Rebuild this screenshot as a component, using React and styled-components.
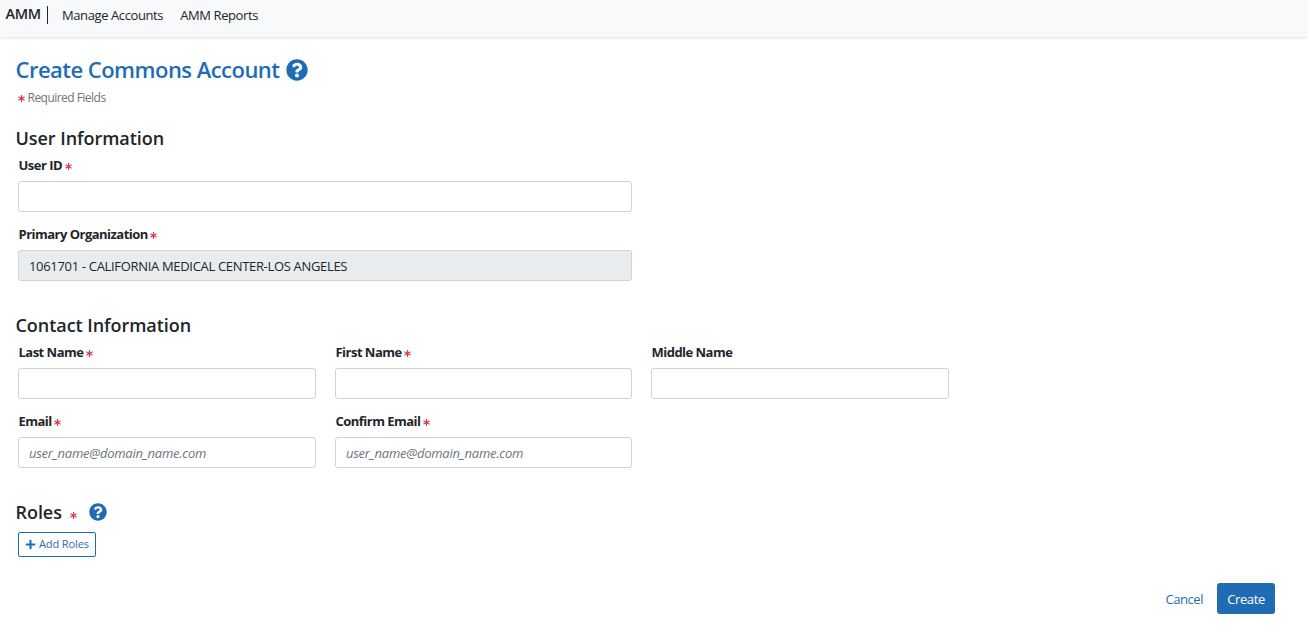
import React from "react";
import styled, { createGlobalStyle } from "styled-components";
import { FaQuestionCircle, FaPlus, FaAsterisk } from "react-icons/fa";

const Global = createGlobalStyle`
  * { box-sizing: border-box; }
  body {
    margin: 0;
    background: #fff;
    color: #212529;
    font: 13px/20px "Segoe UI", "Open Sans", "Noto Sans", sans-serif;
  }
`;

const Nav = styled.nav`
  display: flex;
  align-items: flex-start;
  height: 37px;
  padding: 5px;
  background: #f8f9fa;
  box-shadow: 0 1px 3px rgba(0, 0, 0, 0.13);
`;
const Brand = styled.a`
  width: 43px;
  height: 18px;
  margin-top: 1px;
  padding-left: 0.5px;
  border-right: 1px solid #212529;
  font-size: 14.5px;
  line-height: 16px;
  font-weight: 600;
  letter-spacing: -0.3px;
`;
const NavLink = styled.a`
  margin-left: ${(p) => p.$gap}px;
  line-height: 21px;
  letter-spacing: -0.4px;
  white-space: nowrap;
`;
const Page = styled.main`
  padding: 18px 33px 0 15px;
`;
const Title = styled.h1`
  display: flex;
  align-items: center;
  gap: 7px;
  margin: 0;
  padding: 0 0 2px 0.5px;
  color: #1f6cb4;
  font-size: 22px;
  line-height: 28px;
  font-weight: 600;
  letter-spacing: -0.53px;

  svg { margin-top: 2px; }
`;
const Hint = styled.p`
  display: flex;
  align-items: center;
  gap: 2.5px;
  margin: 3px 0 0 3px;
  color: #6c757d;
  font-size: 12px;
  line-height: 20px;
  letter-spacing: -0.53px;
`;
const Star = styled(FaAsterisk)`
  width: 7px;
  height: 7px;
  flex: none;
  color: #dc3545;
  margin-top: ${(p) => p.$drop ?? 3}px;
`;
const Section = styled.section`
  margin-top: ${(p) => p.$top}px;
`;
const Heading = styled.h2`
  display: flex;
  align-items: center;
  margin: 0;
  padding-left: 0.5px;
  font-size: 18px;
  line-height: 26px;
  font-weight: 600;
  letter-spacing: -0.05px;
`;
const Fields = styled.div`
  display: grid;
  grid-template-columns: 298px 297px 298px;
  column-gap: 19px;
  row-gap: 12px;
  margin: 4px 0 0 3px;
`;
const Field = styled.label`
  display: block;
  grid-column: ${(p) => (p.$wide ? "1 / 3" : "auto")};
`;
const Caption = styled.span`
  display: flex;
  align-items: center;
  gap: 2.5px;
  height: 20px;
  margin-bottom: 6px;
  padding-left: 0.5px;
  font-weight: 700;
  letter-spacing: -0.52px;
`;
const Input = styled.input`
  display: block;
  width: 100%;
  height: 31px;
  padding: 1px 10px 0;
  border: 1px solid #ced4da;
  border-radius: 3px;
  background: #fff;
  color: #212529;
  font: inherit;
  letter-spacing: -0.32px;
  &:disabled { background: #e9ecef; }
  &::placeholder { color: #6c757d; font-style: italic; opacity: 1; letter-spacing: -0.25px; }
`;
const AddButton = styled.button`
  display: flex;
  align-items: center;
  gap: 3px;
  width: 78px;
  height: 25px;
  margin: 7px 0 0 3px;
  padding: 0 0 1px 6px;
  border: 1px solid #1f6cb4;
  border-radius: 2px;
  background: #fff;
  color: #1f6cb4;
  font: inherit;
  font-size: 11px;
  letter-spacing: -0.1px;
  white-space: nowrap;
`;
const Actions = styled.footer`
  display: flex;
  justify-content: flex-end;
  align-items: center;
  gap: 14px;
  margin-top: 26px;
`;
const Cancel = styled.a`
  padding-top: 1px;
  color: #1f6cb4;
  letter-spacing: -0.45px;
`;
const Create = styled.button`
  width: 58px;
  height: 31px;
  padding: 1px 0 0;
  border: 0;
  border-radius: 3px;
  background: #1f6cb4;
  color: #fff;
  font: inherit;
  letter-spacing: -0.4px;
`;
const RolesStar = styled(Star)`
  margin: 6px 12px 0 8px;
`;

function TextField({ label, required, wide, ...rest }) {
  return (
    <Field $wide={wide}>
      <Caption>
        {label}
        {required && <Star />}
      </Caption>
      <Input {...rest} />
    </Field>
  );
}

export default function App() {
  return (
    <>
      <Global />
      <Nav>
        <Brand>AMM</Brand>
        <NavLink $gap={14}>Manage Accounts</NavLink>
        <NavLink $gap={17}>AMM Reports</NavLink>
      </Nav>
      <Page>
        <Title>
          Create Commons Account <FaQuestionCircle size={22} />
        </Title>
        <Hint>
          <Star $drop={1} />
          Required Fields
        </Hint>
        <Section $top={17}>
          <Heading>User Information</Heading>
          <Fields>
            <TextField wide required label="User ID" />
            <TextField
              wide
              required
              disabled
              label="Primary Organization"
              defaultValue="1061701 - CALIFORNIA MEDICAL CENTER-LOS ANGELES"
            />
          </Fields>
        </Section>
        <Section $top={31}>
          <Heading>Contact Information</Heading>
          <Fields>
            <TextField required label="Last Name" />
            <TextField required label="First Name" />
            <TextField label="Middle Name" />
            <TextField required label="Email" placeholder="user_name@domain_name.com" />
            <TextField required label="Confirm Email" placeholder="user_name@domain_name.com" />
          </Fields>
        </Section>
        <Section $top={31}>
          <Heading>
            Roles <RolesStar />
            <FaQuestionCircle size={18} color="#1f6cb4" />
          </Heading>
          <AddButton>
            <FaPlus size={11} /> Add Roles
          </AddButton>
        </Section>
        <Actions>
          <Cancel>Cancel</Cancel>
          <Create>Create</Create>
        </Actions>
      </Page>
    </>
  );
}
